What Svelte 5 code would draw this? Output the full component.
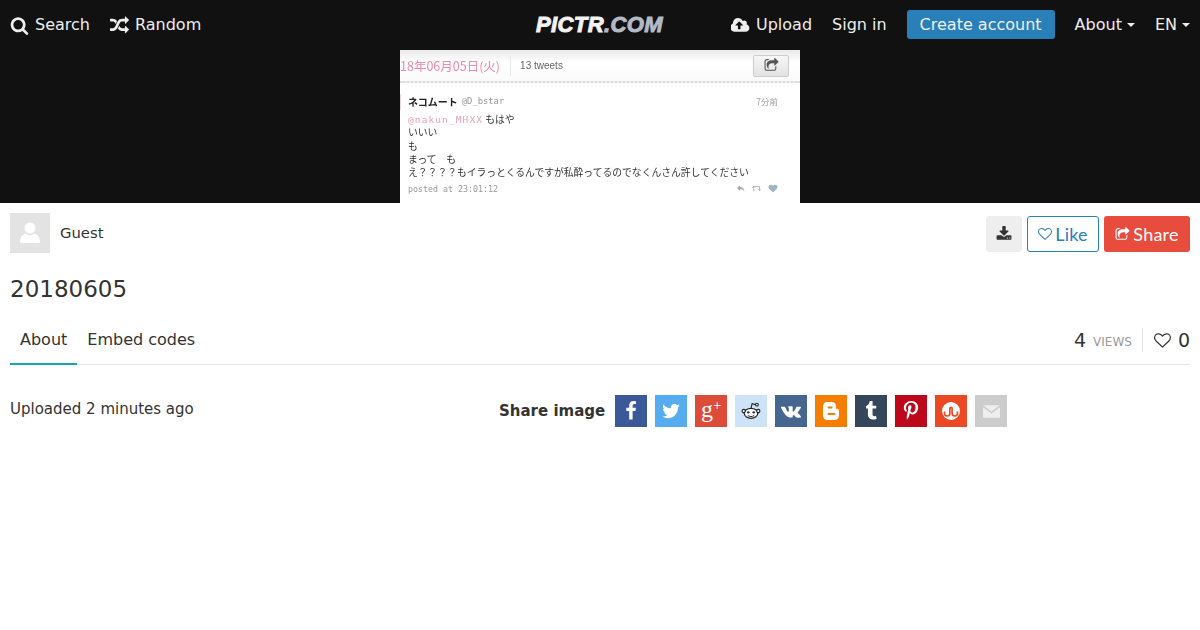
<script>
  const shareIcons = [
    { name: "facebook", bg: "#3b5998", view: "0 0 1792 1792", d: "M1343 12v264h-157q-86 0-116 36t-30 108v189h293l-39 296h-254v759h-306v-759h-255v-296h255v-218q0-186 104-288.5t277-102.5q147 0 228 12z" },
    { name: "twitter", bg: "#55acee", view: "0 0 1792 1792", d: "M1684 408q-67 98-162 167 1 14 1 42 0 130-38 259.5t-115.5 248.5-184.5 210.5-258 146-323 54.5q-271 0-496-145 35 4 78 4 225 0 401-138-105-2-188-64.5t-114-159.5q33 5 61 5 43 0 85-11-112-23-185.5-111.5t-73.5-205.5v-4q68 38 146 41-66-44-105-115t-39-154q0-88 44-163 121 149 294.5 238.5t371.5 99.5q-8-38-8-74 0-134 94.5-228.5t228.5-94.5q140 0 236 102 109-21 205-78-37 115-142 178 90-10 186-54z" },
    { name: "google", bg: "#dd4b39" },
    { name: "reddit", bg: "#cee3f8" },
    { name: "vk", bg: "#45668e", view: "0 0 1920 1792", d: "M1917 517q23 64-150 294-24 32-65 85-78 100-90 131-17 41 14 81 17 21 81 82h1l1 1 1 1 2 2q141 131 191 221 3 5 6.5 12.5t7 26.5-.5 34-25 27.5-59 12.5l-256 4q-24 5-56-5t-52-22l-20-12q-30-21-70-64t-68.5-77.5-61-58-56.5-15.5q-3 1-8 3.5t-17 14.5-21.5 29.5-17 52-6.5 77.5q0 15-3.5 27.5t-7.5 18.5l-4 5q-18 19-53 22h-115q-71 4-146-16.5t-131.5-53-103-66-70.5-57.5l-25-24q-10-10-27.5-30t-71.5-91-106-151-122.5-211-130.5-272q-6-16-6-27t3-16l4-6q15-19 57-19l274-2q12 2 23 6.5t16 8.5l5 3q16 11 24 32 20 50 46 103.5t41 81.5l16 29q29 60 56 104t48.5 68.5 41.5 38.5 34 14 27-5q2-1 5-5t12-22 13.5-47 9.5-81 0-125q-2-40-9-73t-14-46l-6-12q-25-34-85-43-13-2 5-24 16-19 38-30 53-26 239-24 82 1 135 13 20 5 33.5 13.5t20.5 24 10.5 32 3.5 45.5-1 55-2.5 70.5-1.5 82.5q0 11-1 42t-.5 48 3.5 40.5 11.5 39 22.5 24.5q8 2 17 4t26-11 38-34.5 52-67 68-107.5q60-104 107-225 4-10 10-17.5t11-10.5l4-3 5-2.5 13-3 20-.5 288-2q39-5 64 2.5t31 16.5z" },
    { name: "blogger", bg: "#f57d00" },
    { name: "tumblr", bg: "#35465c", view: "0 0 1792 1792", d: "M1328 1329l80 237q-23 35-111 66t-177 32q-104 2-190.5-26t-142.5-74-95-106-55.5-120-16.5-118v-544h-168v-215q72-26 129-69.5t91-90 58-102 34-99 15-88.5q1-5 4.5-8.5t7.5-3.5h244v424h333v252h-334v518q0 30 6.5 56t22.5 52.5 49.5 41.5 81.5 14q78-2 134-29z" },
    { name: "pinterest", bg: "#bd081c", view: "0 0 1792 1792", d: "M256 597q0-108 37.5-203.5t103.5-166.5 152-123 185-78 202-26q158 0 294 66.5t221 193.5 85 287q0 96-19 188t-60 177-100 149.5-145 103-189 38.5q-68 0-135-32t-96-88q-10 39-28 112.5t-23.5 95-20.5 71-26 71-32 62.5-46 77.5-62 86.5l-14 5-9-10q-15-157-15-188 0-92 21.5-206.5t66.5-287.5 52-203q-32-65-32-169 0-83 52-156t132-73q61 0 95 40.5t34 102.5q0 66-44 191t-44 187q0 63 45 104.5t109 41.5q55 0 102-25t78.5-68 56-95 38-110.5 20-111 6.5-99.5q0-173-109.5-269.5t-285.5-96.5q-200 0-334 129.5t-134 328.5q0 44 12.5 85t27 65 27 45.5 12.5 30.5q0 28-15 73t-37 45q-2 0-17-3-51-15-90.5-56t-61-94.5-32.5-108-11-106.5z" },
    { name: "stumbleupon", bg: "#eb4924" },
    { name: "email", bg: "#cccccc" }
  ];

  const heart = "M1664 596q0-81-21.5-143t-55-98.5-81.5-59.5-94-31-98-8-112 25.5-110.5 64-86.5 72-60 61.5q-18 22-49 22t-49-22q-24-28-60-61.5t-86.5-72-110.5-64-112-25.5-98 8-94 31-81.5 59.5-55 98.5-21.5 143q0 168 187 355l581 560 580-559q188-188 188-356zm128 0q0 221-229 450l-623 600q-18 18-44 18t-44-18l-624-602q-10-8-27.5-26t-55.5-65.5-68-97.5-53.5-121-23.5-138q0-220 127-344t351-124q62 0 126.5 21.5t120 58 95.5 68.5 76 68q36-36 76-68t95.5-68.5 120-58 126.5-21.5q224 0 351 124t127 344z";
  const shareSquare = "M1472 989v259q0 119-84.5 203.5t-203.5 84.5h-832q-119 0-203.5-84.5t-84.5-203.5v-832q0-119 84.5-203.5t203.5-84.5h255q13 0 22.5 9.5t9.5 22.5q0 27-26 32-77 26-133 60-10 4-16 4h-112q-66 0-113 47t-47 113v832q0 66 47 113t113 47h832q66 0 113-47t47-113v-214q0-19 18-29 28-13 54-37 16-16 35-8 21 9 21 29zm237-496l-384 384q-18 19-45 19-12 0-25-5-39-17-39-59v-192h-160q-323 0-438 131-119 137-74 473 3 23-20 34-8 2-12 2-16 0-26-13-10-14-21-31t-39.5-68.5-49.5-99.5-38.5-114-17.5-122q0-49 3.5-91t14-90 28-88 47-81.5 68.5-74 94.5-61.5 124.5-48.5 159.5-30.5 196.5-11h160v-192q0-42 39-59 13-5 25-5 26 0 45 19l384 384q19 19 19 45t-19 45z";
</script>

<header class="nav">
  <div class="nav-side">
    <a class="nav-link">
      <svg class="nav-icon" viewBox="0 0 1792 1792"><path d="M1216 832q0-185-131.5-316.5t-316.5-131.5-316.5 131.5-131.5 316.5 131.5 316.5 316.5 131.5 316.5-131.5 131.5-316.5zm512 832q0 52-38 90t-90 38q-54 0-90-38l-343-342q-179 124-399 124-143 0-273.5-55.5t-225-150-150-225-55.5-273.5 55.5-273.5 150-225 225-150 273.5-55.5 273.5 55.5 225 150 150 225 55.5 273.5q0 220-124 399l343 343q37 37 37 90z" /></svg>
      Search
    </a>
    <a class="nav-link">
      <svg class="nav-icon" viewBox="0 0 1792 1792"><path d="M666 481q-60 92-137 273-22-45-37-72.5t-40.5-63.5-51-56.5-63-35-81.5-14.5h-224q-14 0-23-9t-9-23v-192q0-14 9-23t23-9h224q250 0 410 225zm1126 799q0 14-9 23l-320 320q-9 9-23 9-13 0-22.5-9.5t-9.5-22.5v-192q-32 0-85 .5t-81 1-73-1-71-5-64-10.5-63-18.5-58-28.5-59-40-55-53.5-56-69.5q59-93 136-273 22 45 37 72.5t40.5 63.5 51 56.5 63 35 81.5 14.5h256v-192q0-14 9-23t23-9q12 0 24 10l319 319q9 9 9 23zm0-896q0 14-9 23l-320 320q-9 9-23 9-13 0-22.5-9.5t-9.5-22.5v-192h-256q-48 0-87 15t-69 45-51 61.5-45 77.5q-32 62-78 171-29 66-49.5 111t-54 105-64 100-74 83-90 68.5-106.5 42-128 16.5h-224q-14 0-23-9t-9-23v-192q0-14 9-23t23-9h224q48 0 87-15t69-45 51-61.5 45-77.5q32-62 78-171 29-66 49.5-111t54-105 64-100 74-83 90-68.5 106.5-42 128-16.5h256v-192q0-14 9-23t23-9q12 0 24 10l319 319q9 9 9 23z" /></svg>
      Random
    </a>
  </div>
  <div class="logo"><span>PICTR</span><span class="logo-dim">.COM</span></div>
  <div class="nav-side">
    <a class="nav-link">
      <svg class="nav-icon" viewBox="0 0 1920 1792"><path d="M1216 864q0-14-9-23l-352-352q-9-9-23-9t-23 9l-351 351q-10 12-10 24 0 14 9 23t23 9h224v352q0 13 9.5 22.5t22.5 9.5h192q13 0 22.5-9.5t9.5-22.5v-352h224q13 0 22.5-9.5t9.5-22.5zm640 288q0 159-112.5 271.5t-271.5 112.5h-1088q-185 0-316.5-131.5t-131.5-316.5q0-130 70-240t188-165q-2-30-2-43 0-212 150-362t362-150q156 0 285.5 87t188.5 231q71-62 166-62 106 0 181 75t75 181q0 76-41 138 130 31 213.5 135.5t83.5 238.5z" /></svg>
      Upload
    </a>
    <a class="nav-link">Sign in</a>
    <a class="create">Create account</a>
    <a class="nav-link">About<i class="caret"></i></a>
    <a class="nav-link">EN<i class="caret"></i></a>
  </div>
</header>

<div class="stage">
  <div class="shot">
    <div class="shot-head">
      <span class="shot-date">18年06月05日(火)</span>
      <span class="shot-count">13 tweets</span>
      <span class="shot-btn">
        <svg viewBox="0 0 1792 1792"><path d={shareSquare} /></svg>
      </span>
    </div>
    <div class="shot-tweet">
      <div class="shot-line-top">
        <span class="shot-name">ネコムート</span>
        <span class="shot-handle">@D_bstar</span>
        <span class="shot-time">7分前</span>
      </div>
      <div class="shot-body">
        <div><span class="shot-mention">@nakun_MHXX</span> もはや</div>
        <div>いいい</div>
        <div>も</div>
        <div>まって　も</div>
        <div>え？？？？もイラっとくるんですが私酔ってるのでなくんさん許してください</div>
      </div>
      <div class="shot-foot">
        <span>posted at 23:01:12</span>
        <span class="shot-actions">
          <svg viewBox="0 0 12 10"><path d="M5 1 1 4.500 5 8V6c2 0 4 .5 5 3 0-4-2-6-5-6.200z" /></svg>
          <svg viewBox="0 0 12 10"><path d="M2 2.500h7v5M3 7.500h-1v-5M0.500 4 2 2.500 3.500 4M7.500 6 9 7.500 10.500 6" fill="none" stroke="#aaa" stroke-width="1" /></svg>
          <svg class="shot-heart" viewBox="0 0 1792 1792"><path d="M896 1664q-26 0-44-18l-624-602q-10-8-27.500-26t-55.500-65.500-68-97.500-53.500-121-23.500-138q0-220 127-344t351-124q62 0 126.500 21.500t120 58 95.500 68.500 76 68q36-36 76-68t95.500-68.500 120-58 126.500-21.500q224 0 351 124t127 344q0 221-229 450l-623 600q-18 18-44 18z" /></svg>
        </span>
      </div>
    </div>
  </div>
</div>

<main class="page">
  <div class="owner-row">
    <div class="owner">
      <div class="avatar">
        <svg viewBox="0 0 40 40"><circle cx="20" cy="15" r="5.500" /><path d="M11.500 30c-1 0-1.500-.5-1.500-1.500 0-4 2.500-7.500 6-8 1 1.200 2.500 1.800 4 1.800s3-.6 4-1.800c3.500.5 6 4 6 8 0 1-.5 1.500-1.500 1.500z" /></svg>
      </div>
      <span class="owner-name">Guest</span>
    </div>
    <div class="actions">
      <button class="btn-download" aria-label="Download">
        <svg viewBox="0 0 1792 1792"><path d="M1344 1344q0-26-19-45t-45-19-45 19-19 45 19 45 45 19 45-19 19-45zm256 0q0-26-19-45t-45-19-45 19-19 45 19 45 45 19 45-19 19-45zm128-224v320q0 40-28 68t-68 28h-1472q-40 0-68-28t-28-68v-320q0-40 28-68t68-28h465l135 136q58 56 136 56t136-56l136-136h464q40 0 68 28t28 68zm-325-569q17 41-14 70l-448 448q-18 19-45 19t-45-19l-448-448q-31-29-14-70 17-39 59-39h256v-448q0-26 19-45t45-19h256q26 0 45 19t19 45v448h256q42 0 59 39z" /></svg>
      </button>
      <button class="btn-like">
        <svg viewBox="0 0 1792 1792"><path d={heart} /></svg>
        Like
      </button>
      <button class="btn-share">
        <svg viewBox="0 0 1792 1792"><path d={shareSquare} /></svg>
        Share
      </button>
    </div>
  </div>

  <h1>20180605</h1>

  <div class="tabs">
    <a class="tab active">About</a>
    <a class="tab">Embed codes</a>
    <div class="stats">
      <span class="views-count">4</span>
      <span class="views-label">VIEWS</span>
      <span class="sep"></span>
      <svg class="stats-heart" viewBox="0 0 1792 1792"><path d={heart} /></svg>
      <span class="likes-count">0</span>
    </div>
  </div>

  <div class="details">
    <div class="uploaded">Uploaded 2 minutes ago</div>
    <div class="share">
      <strong>Share image</strong>
      {#each shareIcons as icon}
        <a class="share-icon" style="background: {icon.bg}" aria-label={icon.name}>
          {#if icon.d}
            <svg viewBox={icon.view}><path d={icon.d} /></svg>
          {:else if icon.name === "google"}
            <span class="gplus">g<sup>+</sup></span>
          {:else if icon.name === "email"}
            <svg class="mail" viewBox="0 0 18 13">
              <path d="M0 0h18L9 6.500z" />
              <path d="M0 2v11h18V2L9 8.500z" />
            </svg>
          {:else if icon.name === "reddit"}
            <svg viewBox="0 0 22 20">
              <ellipse cx="11" cy="12.500" rx="7.500" ry="5.500" fill="#fff" stroke="#222" stroke-width="1.400" />
              <circle cx="3" cy="10" r="1.800" fill="#fff" stroke="#222" stroke-width="1.200" />
              <circle cx="19" cy="10" r="1.800" fill="#fff" stroke="#222" stroke-width="1.200" />
              <circle cx="17.500" cy="3" r="1.500" fill="#fff" stroke="#222" stroke-width="1.200" />
              <path d="M11 7l1.200-5 4 1" fill="none" stroke="#222" stroke-width="1.200" />
              <circle cx="8" cy="11.500" r="1.300" fill="#222" />
              <circle cx="14" cy="11.500" r="1.300" fill="#222" />
              <path d="M7.500 15c2 1.400 5 1.400 7 0" fill="none" stroke="#222" stroke-width="1.100" />
            </svg>
          {:else if icon.name === "blogger"}
            <svg viewBox="0 0 20 20">
              <path d="M6 1h5c2.500 0 4 1.800 4 4v2.500c1.800 0 3 .8 3 2.500v4.500c0 2.800-2 4.500-4.500 4.500h-7C3.800 19 2 17.300 2 14.500v-9C2 3 3.800 1 6 1z" />
              <rect x="6.500" y="5.500" width="5" height="2" rx="1" fill="#f57d00" />
              <rect x="6.500" y="12" width="8" height="2" rx="1" fill="#f57d00" />
            </svg>
          {:else if icon.name === "stumbleupon"}
            <svg viewBox="0 0 20 20">
              <path d="M10 1a9 9 0 1 0 0 18 9 9 0 0 0 0-18z" />
              <path d="M3.500 10.500v1.800a2.700 2.700 0 0 0 5.400 0V7.500a1.100 1.100 0 0 1 2.200 0v4.800a2.700 2.700 0 0 0 5.400 0v-1.800" fill="none" stroke="#eb4924" stroke-width="1.700" />
            </svg>
          {/if}
        </a>
      {/each}
    </div>
  </div>
</main>

<style>
  :global(body) {
    background: #fff;
    color: #333;
    font-family: "DejaVu Sans", sans-serif;
    font-size: 16px;
  }

  .nav {
    height: 50px;
    background: #111;
    color: #eee;
    padding: 0 10px;
    display: flex;
    align-items: center;
    justify-content: space-between;
    position: relative;
  }

  .nav-side {
    display: flex;
    align-items: center;
    gap: 20px;
  }

  .nav-link {
    display: flex;
    align-items: center;
    gap: 6px;
    color: #eee;
    line-height: 20px;
  }

  .nav-icon {
    width: 19px;
    height: 19px;
    fill: #eee;
  }

  .logo {
    position: absolute;
    left: 536px;
    top: 12px;
    font-family: "Liberation Sans", sans-serif;
    font-weight: 700;
    font-style: italic;
    font-size: 22px;
    line-height: 25px;
    letter-spacing: 0.4px;
    color: #f2f2f2;
    -webkit-text-stroke: 1px currentColor;
    white-space: nowrap;
  }

  .logo-dim {
    color: #b4b9c8;
  }

  .create {
    background: #2980b9;
    color: #eee;
    height: 29px;
    line-height: 29px;
    margin-top: -1px;
    padding: 0 13px;
    border-radius: 3px;
  }

  .caret {
    display: inline-block;
    margin-left: -1px;
    border-top: 4px solid #eee;
    border-left: 4px solid transparent;
    border-right: 4px solid transparent;
  }

  .stage {
    background: #111;
    height: 153px;
    display: flex;
    justify-content: center;
  }

  .shot {
    width: 400px;
    height: 153px;
    background: #fff;
    overflow: hidden;
    font-family: "Noto Sans CJK JP", "DejaVu Sans", sans-serif;
    color: #333;
    filter: blur(0.3px);
  }

  .shot-head {
    height: 31px;
    display: flex;
    align-items: center;
    background: linear-gradient(#e9e9e9, #fff 40%, #fbfbfb);
    border-bottom: 2px dotted #ddd;
  }

  .shot-date {
    font-size: 12.500px;
    color: #ec8aa8;
    padding-right: 10px;
    border-right: 1px solid #e6e6e6;
    line-height: 20px;
  }

  .shot-count {
    margin-left: 9px;
    font-family: "Liberation Sans", sans-serif;
    font-size: 10px;
    color: #666;
  }

  .shot-btn {
    margin-left: auto;
    margin-right: 11px;
    width: 34px;
    height: 20px;
    background: linear-gradient(#f7f7f7, #e2e2e2);
    border: 1px solid #ccc;
    border-radius: 2px;
    display: flex;
    align-items: center;
    justify-content: center;
  }

  .shot-btn svg {
    width: 15px;
    height: 15px;
    fill: #555;
  }

  .shot-tweet {
    padding: 11px 22px 0 8px;
    font-size: 9.800px;
    line-height: 13.300px;
  }

  .shot-line-top {
    display: flex;
    align-items: center;
    gap: 4px;
    height: 16px;
    margin-left: -8px;
    padding-left: 7px;
    border-left: 1px solid #f3d5df;
  }

  .shot-name {
    font-weight: 700;
    font-size: 10px;
    color: #222;
  }

  .shot-handle {
    font-family: "DejaVu Sans Mono", monospace;
    font-size: 8.800px;
    color: #999;
  }

  .shot-time {
    margin-left: auto;
    font-size: 8.500px;
    color: #999;
  }

  .shot-body {
    margin-top: 3px;
    color: #333;
    white-space: nowrap;
  }

  .shot-mention {
    font-family: "DejaVu Sans Mono", monospace;
    font-size: 9.500px;
    letter-spacing: 1.100px;
    color: #eba0b8;
  }

  .shot-foot {
    margin-top: 4px;
    display: flex;
    align-items: center;
    justify-content: space-between;
    font-family: "DejaVu Sans Mono", monospace;
    font-size: 8.300px;
    color: #999;
  }

  .shot-actions {
    display: flex;
    gap: 6px;
    align-items: center;
    margin-top: -3px;
  }

  .shot-actions svg {
    width: 10px;
    height: 9px;
    fill: #aaa;
  }

  .shot-actions .shot-heart {
    fill: #9db4c4;
  }

  .page {
    padding: 10px;
  }

  .owner-row {
    display: flex;
    justify-content: space-between;
    align-items: flex-start;
  }

  .owner {
    display: flex;
    align-items: center;
    gap: 10px;
  }

  .avatar {
    width: 40px;
    height: 40px;
    background: #e3e3e3;
  }

  .avatar svg {
    display: block;
    fill: #fff;
  }

  .owner-name {
    font-size: 14.800px;
    margin-top: -1px;
  }

  .actions {
    display: flex;
    gap: 5px;
    margin-top: 3px;
  }

  button {
    height: 36px;
    border-radius: 3px;
    font-family: "Lato", "DejaVu Sans", sans-serif;
    font-size: 18px;
    letter-spacing: 0.2px;
    display: flex;
    align-items: center;
    justify-content: center;
    padding: 0;
  }

  .btn-download {
    width: 36px;
    background: #eee;
    border: none;
  }

  .btn-download svg {
    width: 16px;
    height: 16px;
    fill: #333;
  }

  .btn-like {
    width: 72px;
    background: #fff;
    border: 1px solid #2980b9;
    color: #2980b9;
    gap: 3px;
  }

  .btn-like svg {
    width: 14px;
    height: 14px;
    fill: #2980b9;
  }

  .btn-share {
    width: 86px;
    background: #e74c3c;
    border: none;
    color: #fff;
    gap: 3px;
  }

  .btn-share svg {
    width: 15px;
    height: 15px;
    fill: #fff;
  }

  h1 {
    margin: 20px 0 0;
    font-size: 23px;
    line-height: 32px;
    font-weight: 400;
    color: #333;
  }

  .tabs {
    margin-top: 13px;
    height: 46px;
    border-bottom: 1px solid #e5e5e5;
    display: flex;
    align-items: stretch;
    box-sizing: content-box;
  }

  .tab {
    padding: 0 10px;
    line-height: 44px;
    height: 45px;
    margin-bottom: -1px;
  }

  .tab.active {
    border-bottom: 2px solid #1ba3b5;
  }

  .stats {
    margin-left: auto;
    display: flex;
    align-items: center;
    height: 44px;
  }

  .views-count {
    font-size: 19px;
  }

  .views-label {
    font-size: 12px;
    color: #999;
    margin-left: 7px;
    margin-top: 3px;
  }

  .sep {
    width: 1px;
    height: 24px;
    background: #e5e5e5;
    margin: 0 11px 0 10px;
  }

  .stats-heart {
    width: 17px;
    height: 17px;
    fill: #333;
  }

  .likes-count {
    font-size: 19px;
    margin-left: 7px;
  }

  .details {
    margin-top: 30px;
    display: flex;
    align-items: flex-start;
    font-size: 15px;
  }

  .uploaded {
    width: 489px;
    line-height: 27px;
    padding-top: 1px;
  }

  .share {
    display: flex;
    align-items: center;
    gap: 8px;
  }

  .share strong {
    font-weight: 700;
    margin-right: 2px;
  }

  .share-icon {
    width: 32px;
    height: 32px;
    display: flex;
    align-items: center;
    justify-content: center;
  }

  .share-icon svg {
    width: 20px;
    height: 20px;
    fill: #fff;
  }

  .share-icon svg.mail {
    width: 17px;
    height: 13px;
    fill: #eee;
  }

  .gplus {
    color: #fff;
    font-family: "Liberation Serif", serif;
    font-size: 24px;
    line-height: 24px;
    margin-top: -5px;
  }

  .gplus sup {
    font-size: 15px;
    line-height: 0;
    vertical-align: 7px;
  }
</style>
